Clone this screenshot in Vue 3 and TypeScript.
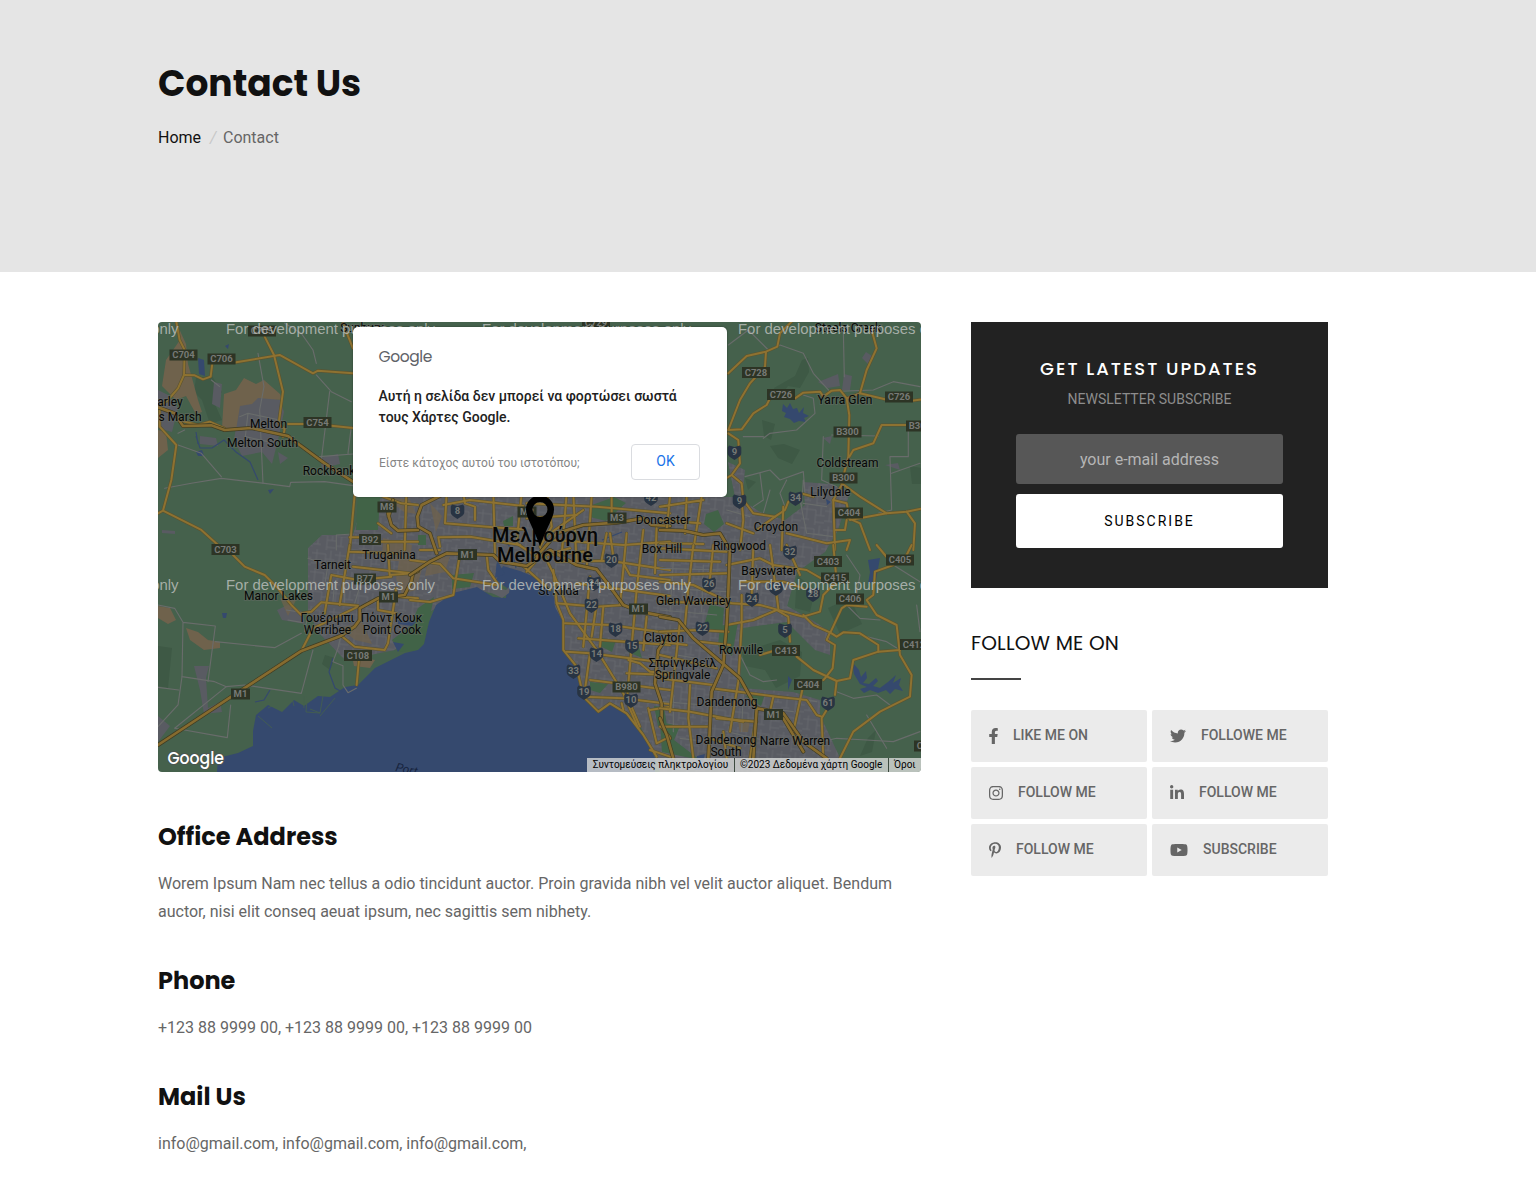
<script setup lang="ts">
interface Place { t: string; x: number; y: number; s?: number }
interface Badge { t: string; x: number; y: number }
interface Sheet { at: string; main: string[]; major: string[]; minor: string[] }
interface Social { label: string; w: number; box: string; d: string }

const places: Place[] = [
  { t: 'Sunbury', x: 362, y: 332 }, { t: 'Steels Creek', x: 848, y: 332 },
  { t: 'arley', x: 170, y: 406 }, { t: 's Marsh', x: 180, y: 421 },
  { t: 'Melton', x: 268.5, y: 428 }, { t: 'Melton South', x: 262.5, y: 447 },
  { t: 'Rockbank', x: 329, y: 475 }, { t: 'Truganina', x: 389, y: 559 },
  { t: 'Tarneit', x: 332.5, y: 569 }, { t: 'Manor Lakes', x: 278.5, y: 600 },
  { t: 'Γουέριμπι', x: 327.5, y: 622 }, { t: 'Werribee', x: 327.5, y: 634 },
  { t: 'Πόιντ Κουκ', x: 391.5, y: 622 }, { t: 'Point Cook', x: 392, y: 634 },
  { t: 'St Kilda', x: 558.5, y: 595 }, { t: 'Doncaster', x: 663, y: 524 },
  { t: 'Box Hill', x: 662, y: 553 }, { t: 'Ringwood', x: 739.5, y: 549.5 },
  { t: 'Croydon', x: 776, y: 531 }, { t: 'Bayswater', x: 769, y: 575 },
  { t: 'Glen Waverley', x: 693.5, y: 605 }, { t: 'Clayton', x: 664, y: 642 },
  { t: 'Rowville', x: 741, y: 654 }, { t: 'Σπρίνγκβεϊλ', x: 682.5, y: 667 },
  { t: 'Springvale', x: 682.5, y: 679 }, { t: 'Dandenong', x: 727, y: 706 },
  { t: 'Dandenong', x: 726, y: 744 }, { t: 'South', x: 726, y: 756 },
  { t: 'Narre Warren', x: 795, y: 745 }, { t: 'Yarra Glen', x: 845, y: 404 },
  { t: 'Coldstream', x: 847.5, y: 467 }, { t: 'Lilydale', x: 830.5, y: 496 },
  { t: 'Μελβούρνη', x: 545, y: 542, s: 20 }, { t: 'Melbourne', x: 545, y: 562, s: 20 },
]

const codes: Badge[] = [
  { t: 'C705', x: 262, y: 331 }, { t: 'C704', x: 183.5, y: 355 }, { t: 'C706', x: 221.5, y: 359 },
  { t: 'C754', x: 317.5, y: 422.5 }, { t: 'M8', x: 387, y: 507 }, { t: 'B92', x: 370, y: 539.5 },
  { t: 'C703', x: 225.5, y: 549.5 }, { t: 'B77', x: 365, y: 579 }, { t: 'M1', x: 388.5, y: 597 },
  { t: 'C108', x: 358, y: 655.5 }, { t: 'M1', x: 240.5, y: 694 }, { t: 'M1', x: 467.5, y: 554.5 },
  { t: 'M2', x: 527, y: 512 }, { t: 'M3', x: 617, y: 518 }, { t: 'M1', x: 638.5, y: 609 },
  { t: 'B980', x: 626.5, y: 687 }, { t: 'C729', x: 596, y: 323 }, { t: 'C728', x: 756, y: 372.5 },
  { t: 'C726', x: 781, y: 394.5 }, { t: 'C726', x: 899, y: 397 }, { t: 'B300', x: 847.5, y: 432 },
  { t: 'B300', x: 843.5, y: 478 }, { t: 'B300', x: 920, y: 426 }, { t: 'C404', x: 849, y: 513 },
  { t: 'C403', x: 828, y: 561.5 }, { t: 'C415', x: 835, y: 578 }, { t: 'C405', x: 900, y: 560 },
  { t: 'C406', x: 850, y: 599 }, { t: 'C412', x: 914, y: 644.5 }, { t: 'C413', x: 786, y: 650.5 },
  { t: 'C404', x: 808, y: 684.5 }, { t: 'M1', x: 773.5, y: 714.5 }, { t: 'C401', x: 928, y: 746 },
]

const shields: Badge[] = [
  { t: '8', x: 457.5, y: 511 }, { t: '42', x: 651, y: 498 }, { t: '9', x: 734.5, y: 452 },
  { t: '9', x: 739.5, y: 501 }, { t: '34', x: 795.5, y: 498 }, { t: '20', x: 611.5, y: 560 },
  { t: '24', x: 594, y: 583 }, { t: '22', x: 591.5, y: 605 }, { t: '18', x: 615.5, y: 629 },
  { t: '15', x: 632, y: 646 }, { t: '14', x: 596.5, y: 654 }, { t: '33', x: 573.5, y: 671 },
  { t: '19', x: 584, y: 692 }, { t: '10', x: 631, y: 700 }, { t: '32', x: 790, y: 552 },
  { t: '26', x: 709, y: 584 }, { t: '24', x: 752, y: 599 }, { t: '9', x: 776, y: 588 },
  { t: '28', x: 813, y: 594 }, { t: '22', x: 702.5, y: 628 }, { t: '5', x: 785, y: 630 },
  { t: '61', x: 828, y: 703 },
]

/* Road geometry, one sheet per map quadrant, drawn in third-of-a-pixel units */
const sheets: Sheet[] = [
  {
    at: 'translate(158 320) scale(.3333)',
    main: ['M55 5L65 60L80 90L78 165L60 205L30 240L0 262', 'M80 165L110 166L135 178L158 170L163 130', 'M320 50L348 105L375 215L362 310L380 328L375 350', 'M235 127L365 105L465 160L480 152L585 160', 'M60 300L120 315L155 305L200 325', 'M390 312H440M520 317L585 324', 'M5 265L5 320L55 375L40 480L15 572L0 580M15 572L130 630L180 675', 'M590 525L575 690M555 10L585 85M575 652H605', 'M675 530L730 550L780 555M745 525L740 690M670 665H780M660 610L700 640'],
    major: ['M0 262L50 280L75 318L160 316L200 330L280 324L390 348L425 375L500 430L585 485', 'M690 580L700 615L720 632L780 630M705 540L692 590'],
    minor: ['M300 100L318 200L305 270L315 490M380 10L430 40L465 90L475 130M475 165L520 215L580 245M515 215L490 420', 'M20 505L100 490L190 475L320 490L395 500L398 487L500 485L585 497M190 470L130 400L60 375', 'M535 690V645L585 642M160 180L185 200M485 410L585 402M580 320L570 400M245 290L270 280L365 300M270 280L262 350L330 365M60 340L80 330'],
  },
  {
    at: 'translate(158 545) scale(.3333)',
    main: ['M225 30L260 65L320 90L360 130L400 180L430 210', 'M430 205L460 200L490 172L600 182M430 318L465 250L600 185', 'M550 272L590 305L680 315L690 295L715 130M603 345L596 420', 'M500 205L520 90L600 105L700 95M545 180L575 0M575 20L720 25M585 65L760 85', 'M690 0L695 90L765 85M660 195L715 205M660 160L660 195M720 155L780 160'],
    major: ['M0 600L220 455L430 318L550 272L590 245L605 225V190L660 160L740 150L760 110L765 85L780 78'],
    minor: ['M0 180L50 190L75 232L172 243L150 410M75 232L72 395L170 410L205 425L260 420L430 445L465 315', 'M172 290L350 308L430 265M72 395L60 480L0 545M205 425L50 550L208 578L218 480M0 427L62 435', 'M548 275L540 310L525 350L555 362V420L570 443L595 430M385 195L450 205L440 260M390 225L430 232M530 110L525 170M560 100V175M610 110L590 175M450 40L510 60L500 120'],
  },
  {
    at: 'translate(410 490) scale(.3333)',
    main: ['M110 10L105 100L250 112L340 118M160 10L165 40L195 50V90M250 10L255 190M335 10L320 160L380 200', 'M0 210L90 222L130 265L260 285M0 330L60 336L130 315L150 190M230 195L235 240L262 280', 'M100 45L180 30L340 48M85 142L180 140L330 165M85 142L90 170M30 180H90', 'M430 240L440 340L460 390V480L500 530L520 620L565 665L600 640L650 670L700 735L740 800', 'M410 10L425 110L390 170L430 250L480 370L560 480L640 610L685 715', 'M350 245L390 200L480 175M330 220L420 300M350 40L560 50L780 70M350 85L500 75', 'M440 215L600 212L780 240M430 150L640 165L780 155M420 130L520 60M500 280L780 318M440 340L560 350L640 345', 'M465 400L600 405L780 430M505 445L780 465M470 485L540 490L780 520M540 570L780 600M520 620L640 625L780 642', 'M470 10L455 200M490 10L500 225M545 20L530 235M590 130L575 210M540 260L520 470M560 340L545 440', 'M650 130L630 345M580 350L570 470M700 120L680 300L650 640M740 110L735 250M640 220L660 255L780 270', 'M655 510L690 520L720 545L780 550M650 550L780 555M540 490L525 600M635 640L640 660M660 640L690 710', 'M715 655L740 760L780 740M720 660L780 650M720 780L780 800M605 100V20M420 195L520 185M710 380L700 480M600 130L610 200'],
    major: ['M95 15L35 45L22 80L25 110L60 130L80 190', 'M0 255L60 215L110 190L250 195L270 215L350 228L420 180L500 225L560 238L600 290L640 345L690 365L780 382', 'M380 200L440 130L520 105L620 98L700 85L725 105L780 108', 'M780 430L745 480L735 580L755 640V710L780 745'],
    minor: [],
  },
  {
    at: 'translate(660 320) scale(.3333)',
    main: ['M395 5L360 40L352 80L318 95L260 108L205 160', 'M318 95L315 140L270 190L240 240L205 330', 'M205 330L245 328L280 280L320 255L330 235', 'M405 235L430 218L480 215L490 230L515 212L540 210L560 235L600 220L675 238', 'M635 30L650 85L620 150L600 220M560 235L568 285L565 410L545 490', 'M568 410L580 390L640 370L665 315H740M755 242L790 238', 'M205 340L235 360L240 430L215 465L245 490L250 540L280 580L345 590M190 480L215 465', 'M430 522L460 530M545 490L600 530L680 580L740 575L790 565M545 495L520 540L525 690', 'M345 590L375 570L385 545M345 590L290 630M555 590L600 610L630 690M740 575L765 610L760 690M520 540L560 550L570 600L680 580', 'M0 560L130 540M30 530L20 630M125 530L100 690M80 530L75 640M240 690L250 600L245 540M370 560L365 690', 'M380 640L500 670L570 660L560 690M200 610L280 640M0 600L120 610M0 670L130 672M525 630H555L560 600'],
    major: ['M0 630L70 632L130 645L180 640L210 690'],
    minor: ['M205 75L265 30L325 90L360 75L430 100L460 160L510 215L640 210L700 185L780 200', 'M553 170L550 30M310 355L330 340L410 330L465 280L460 235L430 225', 'M430 480L425 560M255 470L330 450L360 480L430 455L435 520M490 350L485 480L530 500M515 345L655 348M300 460L310 540L280 560', 'M745 320V410H690L695 570L655 580M695 460L780 430M380 480L360 520L375 560M420 540L440 640L520 650', 'M250 350L310 350M430 550L500 560M330 510L310 580M200 570L270 590'],
  },
  {
    at: 'translate(660 545) scale(.3333)',
    main: ['M0 45L180 50M200 60L300 40L340 60L440 75L500 110M0 90L200 85M0 110L100 120L215 175L300 180L430 215L480 200L490 150L530 110L520 0', 'M200 240L280 225L350 195L385 215L390 290M0 170L210 175M0 260L110 255L205 260', 'M410 335L460 375L530 408L570 400L580 345L655 320L720 315', 'M430 210L460 240L510 262L530 275L550 262L600 265L655 300V320', 'M510 262L500 285L525 300L518 370L495 400L490 405M530 408L525 450', 'M500 495L485 520L490 640M540 640L580 560L660 500L750 455L755 390L720 330L710 240L650 210L620 165L640 150L645 80L700 60L650 0', 'M755 0L740 30L700 60M510 265L545 190L560 180L620 185M420 90L380 0', 'M155 430L350 455L440 465L470 510L485 515M0 490L90 500L250 530M0 545H150M150 580L240 610', 'M340 455L330 500M430 420L400 560M270 640L290 500M0 330L170 370M60 230L30 500M245 150V240L235 410L210 560', 'M100 0L85 130L75 240M160 0L150 100M280 0L275 160M330 0L355 190M0 400L160 420M90 420L85 520L100 640M245 110H370L430 130', 'M170 520L290 530M190 560L200 640M120 290L210 300M0 290L80 300M300 330L340 318M0 10L200 20'],
    major: ['M210 0L205 140L200 240L190 360L155 440L145 640', 'M0 215L55 225L100 280L240 400L290 490L370 505L430 590L500 640', 'M290 490L280 640M0 520L20 570L40 640M370 520L430 620'],
    minor: ['M240 330L270 390L310 410L350 405M530 440L580 460L650 450L690 480M600 270L680 290L720 315M560 180L600 220L660 225M440 600L530 580L620 585L700 590L780 560', 'M560 30L600 90L590 150M700 60L780 110M770 180L780 260M620 510L680 610M200 560L330 590M250 440L245 560M40 50L30 200M130 60L125 200M310 80L240 90', 'M0 70L180 75M20 130L200 140M0 195L170 210M290 60V150M60 260L50 330L110 340M40 440V560M10 470L130 480M60 580L140 590M320 490L400 500M410 460L470 470'],
  },
]

const rows = [334, 590]
const full = 'For development purposes only'

const socials: Social[] = [
  { label: 'LIKE ME ON', w: 9, box: '22 0 275 512', d: 'M279.14 288l14.22-92.66h-88.91v-60.13c0-25.35 12.42-50.06 52.24-50.06h40.42V6.26S260.43 0 225.36 0c-73.22 0-121.08 44.38-121.08 124.72v70.62H22.89V288h81.39v224h100.17V288z' },
  { label: 'FOLLOWE ME', w: 16, box: '0 0 512 512', d: 'M459.37 151.716c.325 4.548.325 9.097.325 13.645 0 138.72-105.583 298.558-298.558 298.558-59.452 0-114.68-17.219-161.137-47.106 8.447.974 16.568 1.299 25.34 1.299 49.055 0 94.213-16.568 130.274-44.832-46.132-.975-84.792-31.188-98.112-72.772 6.498.974 12.995 1.624 19.818 1.624 9.421 0 18.843-1.3 27.614-3.573-48.081-9.747-84.143-51.98-84.143-102.985v-1.299c13.969 7.797 30.214 12.67 47.431 13.319-28.264-18.843-46.781-51.005-46.781-87.391 0-19.492 5.197-37.36 14.294-52.954 51.655 63.675 129.3 105.258 216.365 109.807-1.624-7.797-2.599-15.918-2.599-24.04 0-57.828 46.782-104.934 104.934-104.934 30.213 0 57.502 12.67 76.67 33.137 23.715-4.548 46.456-13.32 66.599-25.34-7.798 24.366-24.366 44.833-46.132 57.827 21.117-2.273 41.584-8.122 60.426-16.243-14.292 20.791-32.161 39.308-52.628 54.253z' },
  { label: 'FOLLOW ME', w: 14, box: '0 0 448 512', d: 'M224.1 141c-63.6 0-114.9 51.3-114.9 114.9s51.3 114.9 114.9 114.9S339 319.5 339 255.9 287.7 141 224.1 141zm0 189.6c-41.1 0-74.7-33.5-74.7-74.7s33.5-74.7 74.7-74.7 74.7 33.5 74.7 74.7-33.6 74.7-74.7 74.7zm146.4-194.3c0 14.9-12 26.8-26.8 26.8-14.9 0-26.8-12-26.8-26.8s12-26.8 26.8-26.8 26.8 12 26.8 26.8zm76.1 27.2c-1.7-35.9-9.9-67.7-36.2-93.9-26.2-26.2-58-34.4-93.9-36.2-37-2.1-147.9-2.1-184.9 0-35.8 1.7-67.6 9.9-93.9 36.1s-34.4 58-36.2 93.9c-2.1 37-2.1 147.9 0 184.9 1.7 35.9 9.9 67.7 36.2 93.9s58 34.4 93.9 36.2c37 2.1 147.9 2.1 184.9 0 35.9-1.7 67.7-9.9 93.9-36.2 26.2-26.2 34.4-58 36.2-93.9 2.1-37 2.1-147.8 0-184.8zM398.8 388c-7.8 19.6-22.9 34.7-42.6 42.6-29.5 11.7-99.5 9-132.1 9s-102.7 2.6-132.1-9c-19.6-7.8-34.7-22.9-42.6-42.6-11.7-29.5-9-99.5-9-132.1s-2.6-102.7 9-132.1c7.8-19.6 22.9-34.7 42.6-42.6 29.5-11.7 99.5-9 132.1-9s102.7-2.6 132.1 9c19.6 7.8 34.7 22.9 42.6 42.6 11.7 29.5 9 99.5 9 132.1s2.7 102.7-9 132.1z' },
  { label: 'FOLLOW ME', w: 14, box: '0 0 448 512', d: 'M100.28 448H7.4V148.9h92.88zM53.79 108.1C24.09 108.1 0 83.5 0 53.8a53.79 53.79 0 0 1 107.58 0c0 29.7-24.1 54.3-53.79 54.3zM447.9 448h-92.68V302.4c0-34.7-.7-79.2-48.29-79.2-48.29 0-55.69 37.7-55.69 76.7V448h-92.78V148.9h89.08v40.8h1.3c12.4-23.5 42.69-48.3 87.88-48.3 94 0 111.28 61.9 111.28 142.3V448z' },
  { label: 'FOLLOW ME', w: 12, box: '0 0 384 512', d: 'M204 6.5C101.4 6.5 0 74.9 0 185.6 0 256 39.6 296 63.6 296c9.9 0 15.6-27.6 15.6-35.4 0-9.3-23.7-29.1-23.7-67.8 0-80.4 61.2-137.4 140.4-137.4 68.1 0 118.5 38.7 118.5 109.8 0 53.1-21.3 152.7-90.3 152.7-24.9 0-46.2-18-46.2-43.8 0-37.8 26.4-74.4 26.4-113.4 0-66.2-93.9-54.2-93.9 25.8 0 16.8 2.1 35.4 9.6 50.7-13.8 59.4-42 147.9-42 209.1 0 18.9 2.7 37.5 4.5 56.4 3.4 3.8 1.7 3.4 6.9 1.5 50.4-69 48.6-82.5 71.4-172.8 12.3 23.4 44.1 36 69.3 36 106.2 0 153.9-103.5 153.9-196.8C384 71.3 298.2 6.5 204 6.5z' },
  { label: 'SUBSCRIBE', w: 18, box: '0 0 576 512', d: 'M549.655 124.083c-6.281-23.65-24.787-42.276-48.284-48.597C458.781 64 288 64 288 64S117.22 64 74.629 75.486c-23.497 6.322-42.003 24.947-48.284 48.597-11.412 42.867-11.412 132.305-11.412 132.305s0 89.438 11.412 132.305c6.281 23.65 24.787 41.5 48.284 47.821C117.22 448 288 448 288 448s170.78 0 213.371-11.486c23.497-6.321 42.003-24.171 48.284-47.821 11.412-42.867 11.412-132.305 11.412-132.305s0-89.438-11.412-132.305zm-317.51 213.508V175.185l142.739 81.205-142.739 81.201z' },
]

const metro = 'M308 548L322 535L352 538L362 505L385 497L700 497L735 497L728 462L745 470L742 500L760 512L785 520L805 505L803 482L830 484L850 492L838 530L825 552L797 572L787 606L812 620L830 632L830 655L815 650L787 622L742 628L740 688L793 692L820 700L820 715L840 758L850 772L660 772L655 758L640 725L627 712L612 703L598 712L584 700L574 663L562 648L560 628L552 604L546 590L500 575L500 595L476 590L452 597L430 612L395 650L345 660L318 632L308 610Z'
</script>

<template>
  <div class="page">
    <header class="hero">
      <div class="wrap">
        <h1>Contact Us</h1>
        <nav class="crumbs"><a>Home</a><i>/</i><span>Contact</span></nav>
      </div>
    </header>

    <div class="wrap body">
      <main>
        <div class="map">
          <svg class="canvas" viewBox="158 322 763 450" width="763" height="450">
            <defs>
              <pattern id="streets" width="23" height="19" patternUnits="userSpaceOnUse" patternTransform="rotate(6)">
                <path d="M0 4H14V9H23M0 14H8M14 16H23M5 0V14M14 9V19M19 0V9" fill="none" stroke="#66686d" stroke-width=".8" />
              </pattern>
            </defs>
            <rect x="158" y="322" width="763" height="450" fill="#45614c" />
            <!-- forest -->
            <g fill="#3e5945">
              <path d="M196 378L212 376L222 392L214 402L222 420L210 424L202 400L194 392Z" />
              <path d="M158 646L172 648L168 688L158 686ZM325 655L335 658L330 670L322 664Z" />
              <path d="M802 360L808 358L809 372L800 388L788 386L779 398L774 388L795 376Z" />
              <path d="M762 420L775 424L771 440L764 436ZM770 446L784 444L800 450L792 464L778 458ZM745 478L756 482L748 490Z" />
              <path d="M742 652L780 640L802 652L800 676L776 688L765 670L745 666ZM797 575L815 590L810 612L795 608Z" />
              <path d="M828 608L850 598L862 624L840 634ZM910 466L921 468V484H912ZM868 738L876 730L872 752L860 756Z" />
            </g>
            <!-- built-up -->
            <g fill="#595b62">
              <path :d="metro" />
              <path d="M158 390L170 396L178 408L172 432L158 428Z" />
              <path d="M239 405L254 402L254 394L280 400L284 412L278 440L272 464L262 452L242 456L234 440Z" />
              <path d="M320 458L338 454L340 464L322 468ZM278 452L288 458L280 464ZM200 436L216 438L218 446L200 444Z" />
              <path d="M214 382L222 384L220 408L212 404ZM194 666L209 666L206 678L208 708L220 702L222 712L204 714L200 690ZM162 530L175 531V534L162 533ZM323 535L353 535V550H308Z" />
              <path d="M844 374L852 376L850 390H842ZM818 382L838 374L840 386L828 388ZM866 352L872 356L868 364L862 358ZM823 438L832 436L830 444ZM885 465L898 463L900 470ZM158 716L170 726L158 742Z" />
              <path d="M277 610L290 604L302 612L305 624L282 620Z" />
            </g>
            <path :d="metro" fill="url(#streets)" />
            <!-- parks inside the built-up area -->
            <g fill="#416347">
              <path d="M358 497H380L378 530L356 530Z" />
              <path d="M418 535h8v10h-8zM503 521l10-5v10h-9zM592 505l22-8 12 6-20 18-16-4zM590 682l18 2-8 9-10-3zM600 638l16 2-4 12-12-6z" />
              <path d="M660 722l20 4-6 14 26 20-38-8zM706 514l12-4 6 14-10 8-10-8zM710 604l14 4-2 26-18-8zM720 626l18-4-6 34-14-10zM626 640l12 4 4 14-14-6zM452 575l22-2-4 14-18 2zM745 696l20-2-4 12zM654 706l10 1 4 25-10-6z" />
              <path d="M418 608L434 597L425 640L423 650L400 652L392 640L410 626Z" />
            </g>
            <!-- farmland and industrial -->
            <g fill="#6f624c">
              <path d="M166 360L180 340L176 322L186 344L188 364L192 378L198 400L202 412L196 414L186 396L176 400L162 386Z" />
              <path d="M224 394L236 390L244 378L256 384L264 380L280 394L282 400L258 398L252 404L240 406L236 430L222 428Z" />
              <path d="M158 430L166 432L168 450L158 458Z" />
              <path d="M158 606L170 608L176 620L168 624L158 618ZM186 628L198 632L208 640L220 642L220 648L204 650L190 640ZM352 656L375 660L370 668L354 666Z" />
              <path d="M383 538L412 545L410 562L382 560ZM386 497L410 500L416 514L404 512ZM428 560L450 556L445 572L425 576ZM400 556L424 562L416 590L402 594L396 578ZM280 598L296 600L288 616ZM738 722L750 720L748 732L740 732ZM340 628L362 622L372 644L355 640ZM430 503L442 516L436 532Z" opacity=".75" />
            </g>
            <!-- water -->
            <g fill="#35496e">
              <path d="M217 772L218 758L238 753L253 746L253 731L256 715L268 705L282 712L294 700L304 706L318 696L330 697L345 687L358 685L375 668L405 653L418 650L424 644L429 622L436 605L453 593L477 587L493 597L506 598L507 588L496 580L503 566L520 571L537 578L553 590L555 607L562 620L563 650L573 662L583 697L598 712L610 703L627 713L643 733L655 758V772Z" />
              <path d="M198 358L204 360L205 376L199 374ZM225 346l4-2-1 5zM196 452l6-2 2 6-6 0zM268 490l6-1-4 5zM222 613l5 0-1 5-3 0zM393 642L404 644L398 652ZM880 558L868 560L870 572L868 584L876 580Z" />
              <path d="M783 404L787 408L790 403L793 409L797 408L799 413L804 407L803 413L809 416L804 418L806 422L799 421L794 423L790 419L784 417L786 413L782 411Z" />
              <path d="M852 662L859 670L861 677L866 671L867 678L863 683L869 684L876 678L878 681L873 686L880 688L888 682L896 675L893 683L901 678L899 685L903 691L895 689L890 694L886 690L878 693L870 690L864 693L860 689L867 687L860 684L854 674ZM788 676L792 680L788 690ZM497 560l8 14-10 4zM398 620l18 2-4 4-14-2zM697 756l8-2-4 16-6 0zM826 499l5 3-4 3z" />
            </g>
            <path d="M498 588L506 590L510 586L509 593L502 598L490 592Z" fill="#5d5f65" />
            <g fill="none" stroke="#35496e" stroke-width="1.2">
              <path d="M196 436L200 448L212 448L224 440L236 452L250 462L258 480M333 658L329 672L335 688L342 692M255 702L264 700L270 690M196 432L198 444M498 530l14 20 4 18M602 540l20-8" />
            </g>
            <g fill="none" stroke="#45614c" stroke-width=".8">
              <path d="M292 698L294 706M304 696V708M307 696L306 712L320 713L323 696M268 708L280 702M335 698L320 716M258 716L272 728M310 709L320 713" />
            </g>

            <g v-for="(s, i) in sheets" :key="i" :transform="s.at" fill="none" stroke-linejoin="round" stroke-linecap="round">
              <path v-for="(d, k) in s.minor" :key="'m' + k" :d="d" stroke="#696c6b" stroke-width="3.4" />
              <path v-for="(d, k) in s.main" :key="'c' + k" :d="d" stroke="#5b532f" stroke-width="9.5" />
              <path v-for="(d, k) in s.main" :key="'r' + k" :d="d" stroke="#8e7231" stroke-width="6" />
              <path v-for="(d, k) in s.major" :key="'d' + k" :d="d" stroke="#413c22" stroke-width="12" />
              <path v-for="(d, k) in s.major" :key="'e' + k" :d="d" stroke="#866b2f" stroke-width="8" />
            </g>

            <g v-for="(c, i) in codes" :key="'b' + i">
              <rect :x="c.x - (c.t.length * 3.05 + 1.8) - (c.t.length < 3 ? 1.6 : 0)" :y="c.y - 5.5" :width="c.t.length * 6.1 + 3.6 + (c.t.length < 3 ? 3.2 : 0)" height="11" fill="#2d3425" />
              <text class="code" :x="c.x" :y="c.y + 3.2">{{ c.t }}</text>
            </g>
            <g v-for="(c, i) in shields" :key="'s' + i">
              <path :transform="`translate(${c.x} ${c.y})`" d="M-5.500-6.500L0-5L5.500-6.500L6.800-4.500V1C6.800 4.500 3 6 0 8C-3 6-6.800 4.500-6.800 1V-4.500Z" fill="#283443" />
              <text class="code" :x="c.x" :y="c.y + 3.4">{{ c.t }}</text>
            </g>
            <text v-for="(p, i) in places" :key="'p' + i" :class="['place', { big: p.s }]" :x="p.x" :y="p.y">{{ p.t }}</text>
            <text class="sea" x="395" y="771" transform="rotate(12 395 771)">Port</text>
            <g v-for="y in rows" :key="y" class="mark">
              <text x="178.5" :y="y" text-anchor="end">only</text>
              <text v-for="x in [226, 482, 738]" :key="x" :x="x" :y="y">{{ full }}</text>
            </g>
            <path d="M540 495.500a14 14 0 0 0-14 14c0 8 8 19 14 37c6-18 14-29 14-37a14 14 0 0 0-14-14zm0 6.500a7.500 7.500 0 1 1 0 15a7.500 7.500 0 0 1 0-15z" fill="#000" fill-rule="evenodd" />
            <text class="glogo" x="167.500" y="764" textLength="56.500" lengthAdjust="spacingAndGlyphs">Google</text>
          </svg>
          <div class="dialog">
            <div class="brand">Google</div>
            <p>Αυτή η σελίδα δεν μπορεί να φορτώσει σωστά τους Χάρτες Google.</p>
            <div class="actions"><span>Είστε κάτοχος αυτού του ιστοτόπου;</span><button>OK</button></div>
          </div>
          <div class="credits"><span>Συντομεύσεις πληκτρολογίου</span><span>©2023 Δεδομένα χάρτη Google</span><span>Όροι</span></div>
        </div>

        <section><h2>Office Address</h2><p>Worem Ipsum Nam nec tellus a odio tincidunt auctor. Proin gravida nibh vel velit auctor aliquet. Bendum auctor, nisi elit conseq aeuat ipsum, nec sagittis sem nibhety.</p></section>
        <section><h2>Phone</h2><p>+123 88 9999 00, +123 88 9999 00, +123 88 9999 00</p></section>
        <section><h2>Mail Us</h2><p>info@gmail.com, info@gmail.com, info@gmail.com,</p></section>
      </main>

      <aside>
        <div class="news">
          <h3>GET LATEST UPDATES</h3>
          <p>NEWSLETTER SUBSCRIBE</p>
          <div class="field">your e-mail address</div>
          <button>SUBSCRIBE</button>
        </div>
        <h4>FOLLOW ME ON</h4>
        <div class="rule"></div>
        <div class="socials">
          <a v-for="(s, i) in socials" :key="i">
            <svg :viewBox="s.box" :width="s.w" height="16"><path :d="s.d" fill="currentColor" /></svg>
            <span>{{ s.label }}</span>
          </a>
        </div>
      </aside>
    </div>
  </div>
</template>

<style>
body { margin: 0; background: #fff; }
</style>
<style scoped>
.page { height: 1194px; overflow: hidden; font-family: Roboto, sans-serif; font-size: 16px; line-height: 28px; color: #666; }
.wrap { width: 1170px; margin-left: 158px; }
h1, h2, h3, h4, p { margin: 0; }
h1, h2, h3, h4 { font-family: Poppins, Inter, sans-serif; color: #111; }
.hero { height: 272px; background: #e5e5e5; }
.hero .wrap { padding-top: 62px; }
h1 { font-size: 36px; line-height: 44px; font-weight: 700; white-space: nowrap; }
.crumbs { display: flex; margin-top: 18px; }
.crumbs a { color: #111; }
.crumbs i { margin: 0 6.5px 0 9px; color: #c8c8c8; }
.body { display: flex; gap: 50px; padding-top: 50px; }
main { width: 763px; flex: none; }
.map { position: relative; height: 450px; border-radius: 4px; overflow: hidden; margin-bottom: 50px; }
.canvas { display: block; }
.canvas text { font-family: Roboto, sans-serif; }
.canvas .place { font-size: 12px; text-anchor: middle; fill: #060606; paint-order: stroke; stroke: #6b6e69; stroke-opacity: .45; stroke-width: 2px; }
.canvas .big { font-size: 20px; font-weight: 500; }
.canvas .code { font-size: 9.5px; font-weight: 700; text-anchor: middle; fill: #777a76; }
.canvas .mark text { font-family: "Liberation Sans", sans-serif; font-size: 14.93px; fill: #b9bdb9; fill-opacity: .85; }
.canvas .sea { font-size: 12px; font-style: italic; fill: #17243e; }
.canvas .glogo { font-family: Poppins, Lato, sans-serif; font-size: 17px; font-weight: 500; fill: #fff; paint-order: stroke; stroke: #4b554f; stroke-width: 2px; }
.dialog { position: absolute; left: 195px; top: 5px; width: 374px; height: 170px; box-sizing: border-box; padding: 18px 27px 17px 25.5px; border-radius: 5px; background: #fff; box-shadow: 0 0 2px rgba(0,0,0,.4); }
.brand { font-family: Poppins, Lato, sans-serif; font-size: 15.5px; line-height: 24px; color: #5f6368; letter-spacing: -.4px; }
.dialog p { margin-top: 17px; width: 320px; font-size: 14px; line-height: 21px; font-weight: 500; color: #212121; }
.actions { display: flex; justify-content: space-between; align-items: center; margin-top: 16px; }
.actions span { position: relative; top: 1px; left: .5px; font-size: 12px; color: #858585; }
.actions button { width: 69px; height: 36px; border: 1px solid #dadce0; border-radius: 4px; background: #fff; color: #1a73e8; font: 400 14px Roboto, sans-serif; padding: 0 0 2px; }
.credits { position: absolute; right: 0; bottom: 0; display: flex; height: 14px; font-size: 10px; line-height: 14px; color: #000; white-space: nowrap; background: rgba(225,227,225,.75); }
.credits span { padding: 0 5.4px; }
.credits span + span { border-left: 1px solid #3c4a3f; }
section { margin-bottom: 40px; }
h2 { font-size: 24px; line-height: 30px; margin-bottom: 18px; font-weight: 700; }
aside { width: 357px; flex: none; }
.news { height: 266px; box-sizing: border-box; padding: 34px 45px 0; background: #222; text-align: center; }
.news h3 { color: #fff; font-size: 18px; line-height: 26px; font-weight: 500; letter-spacing: 2px; white-space: nowrap; }
.news p { font-size: 14px; line-height: 20px; margin-top: 7px; color: #8d8d8d; }
.field { height: 50px; line-height: 51px; margin-top: 25px; border-radius: 3px; background: #575757; color: #b5b5b5; }
.news button { display: block; width: 267px; height: 54px; margin-top: 10px; border: 0; border-radius: 3px; background: #fff; color: #000; font: 400 14px Roboto, sans-serif; letter-spacing: 2px; }
h4 { font-size: 20px; font-weight: 400; line-height: 30px; margin-top: 40px; letter-spacing: .15px; white-space: nowrap; }
.rule { width: 50px; height: 2px; margin: 20px 0 30px; background: #444; }
.socials { display: grid; grid-template-columns: 176px 176px; gap: 5px; }
.socials a { display: flex; align-items: center; height: 52px; box-sizing: border-box; padding-left: 18px; border-radius: 2px; background: #ebebeb; font-size: 14px; font-weight: 500; line-height: 20px; }
.socials svg { margin-right: 15px; flex: none; }
.socials span { position: relative; top: -1px; }
</style>
